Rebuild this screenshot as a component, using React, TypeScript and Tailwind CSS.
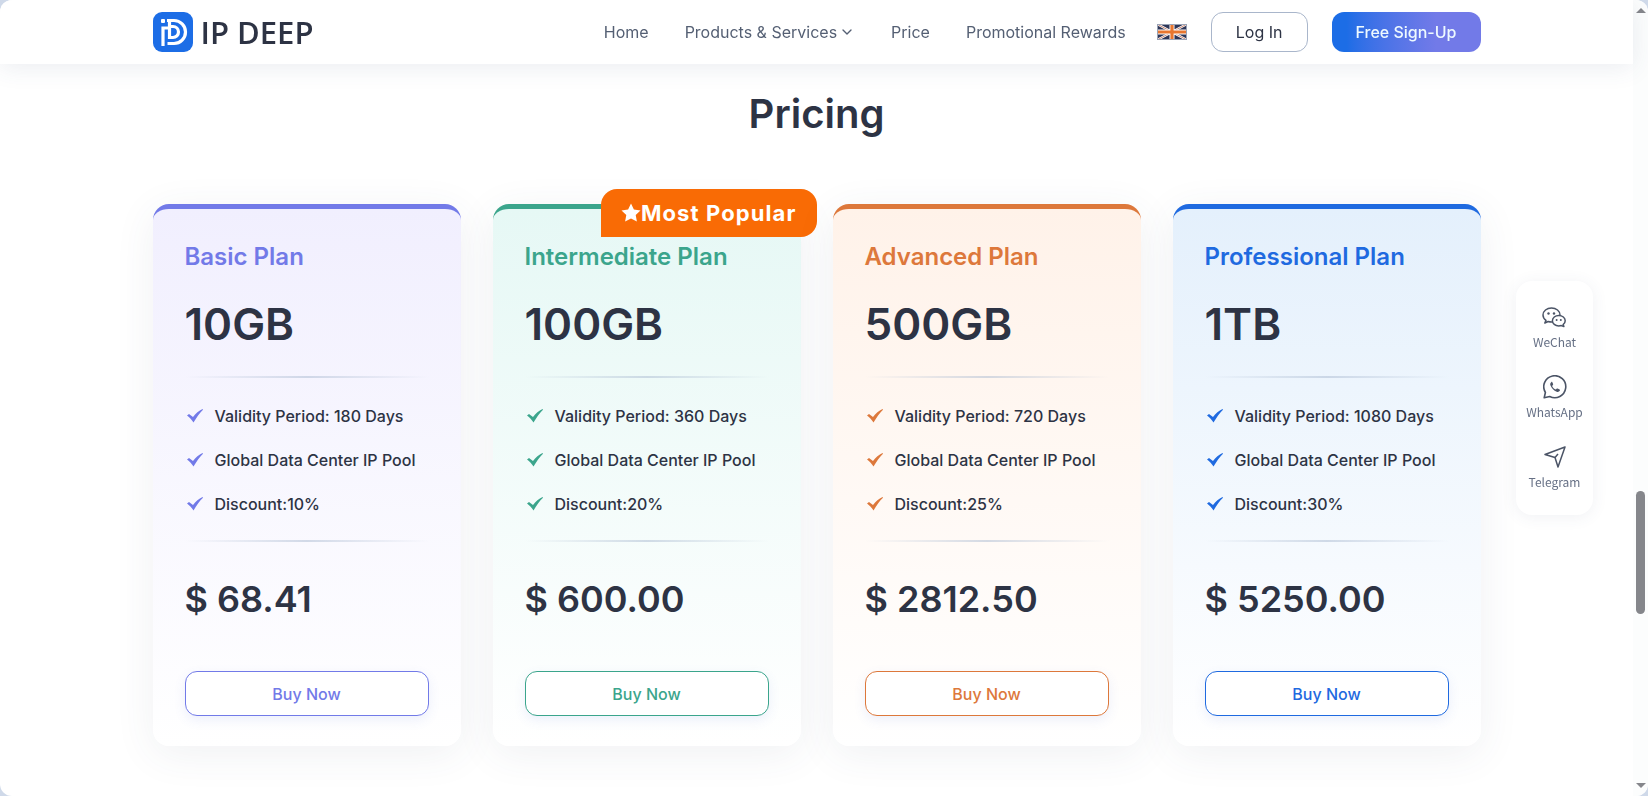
import { ChevronDown } from "lucide-react";

type Plan = {
  name: string;
  size: string;
  days: number;
  discount: number;
  price: string;
  card: string;
  text: string;
  button: string;
  popular?: boolean;
};

const plans: Plan[] = [
  {
    name: "Basic Plan",
    size: "10GB",
    days: 180,
    discount: 10,
    price: "68.41",
    card: "border-[#727ae8] from-[#f1effe]",
    text: "text-[#727ae8]",
    button: "border-[#727ae8]",
  },
  {
    name: "Intermediate Plan",
    size: "100GB",
    days: 360,
    discount: 20,
    price: "600.00",
    card: "border-[#3ba58c] from-[#e6f8f5]",
    text: "text-[#3ba58c]",
    button: "border-[#3ba58c]",
    popular: true,
  },
  {
    name: "Advanced Plan",
    size: "500GB",
    days: 720,
    discount: 25,
    price: "2812.50",
    card: "border-[#dd783b] from-[#fff2e9]",
    text: "text-[#dd783b]",
    button: "border-[#dd783b]",
  },
  {
    name: "Professional Plan",
    size: "1TB",
    days: 1080,
    discount: 30,
    price: "5250.00",
    card: "border-[#1f6ae0] from-[#e4f0fc]",
    text: "text-[#1f6ae0]",
    button: "border-[#1f6ae0]",
  },
];

function Logo() {
  return (
    <a href="#" className="flex items-center gap-2 shrink-0">
      <svg viewBox="0 0 40 40" className="size-10" aria-hidden="true">
        <rect width="40" height="40" rx="9" fill="#1c6de6" />
        <rect x="8" y="7" width="4" height="4" rx="1" fill="#fff" />
        <g fill="none" stroke="#fff" strokeWidth="3.2">
          <path d="M10 34V16h7" />
          <path d="M14 8.500h7a11.500 11.500 0 0 1 0 23h-6.500" />
          <path d="M16.500 8v17.500h3.500a5.500 5.500 0 0 0 0-11h-3" />
        </g>
      </svg>
      <span className="font-['Open_Sans',sans-serif] text-[31px] leading-10 font-semibold">IP DEEP</span>
    </a>
  );
}

function Flag() {
  return (
    <svg viewBox="0 0 30 16" className="w-[30px] h-4" aria-hidden="true">
      <rect width="30" height="16" fill="#2d3557" />
      <path d="M0 0l30 16M30 0L0 16" stroke="#fff" strokeWidth="2.4" />
      <path d="M0 0l30 16M30 0L0 16" stroke="#b0563a" strokeWidth=".7" />
      <path d="M15 0v16M0 8h30" stroke="#fff" strokeWidth="5" />
      <path d="M15 0v16M0 8h30" stroke="#e8762f" strokeWidth="3.2" />
      <rect x=".5" y=".5" width="29" height="15" fill="none" stroke="#9aa3b5" />
    </svg>
  );
}

function Header() {
  return (
    <header className="relative z-10 bg-white shadow-[0_4px_24px_rgba(60,80,120,0.10)]">
      <div className="max-w-[1328px] mx-auto h-16 flex items-center justify-between">
        <Logo />
        <div className="flex items-center gap-6">
          <nav className="flex items-center gap-9 mr-[7px] text-base text-[#545f73]">
            <a href="#">Home</a>
            <a href="#" className="flex items-center gap-0.5">
              Products &amp; Services
              <ChevronDown size={16} />
            </a>
            <a href="#">Price</a>
            <a href="#">Promotional Rewards</a>
          </nav>
          <button aria-label="Language">
            <Flag />
          </button>
          <button className="h-10 px-6 rounded-xl border border-[#a9b6cb]">Log In</button>
          <button className="h-10 px-6 rounded-xl bg-linear-to-r from-[#1c6de6] from-10% to-[#727ae8] to-70% font-medium text-[#eefaff]">
            Free Sign-Up
          </button>
        </div>
      </div>
    </header>
  );
}

function Check() {
  return (
    <svg viewBox="0 0 16 14" className="w-4 h-[14px] ml-0.5 shrink-0" fill="currentColor" aria-hidden="true">
      <path d="M0 6.500l2-1.500 4 3C8.500 4.500 12 1.500 15.500 0l.5.700C12.500 4 9.500 8.500 6.500 13.500 5 11 2.500 8.500 0 6.500z" />
    </svg>
  );
}

function Divider() {
  return <div className="h-0.5 bg-linear-to-r from-transparent via-[#a9b9d0]/50 to-transparent" />;
}

function PlanCard({ plan }: { plan: Plan }) {
  const features = [
    `Validity Period: ${plan.days} Days`,
    "Global Data Center IP Pool",
    `Discount:${plan.discount}%`,
  ];

  return (
    <article
      className={`relative rounded-2xl border-t-[5px] bg-linear-to-b to-white px-8 pt-[33px] pb-[30px] shadow-[0_8px_40px_rgba(60,80,100,0.08)] ${plan.card}`}
    >
      {plan.popular && (
        <div className="absolute -top-5 -right-4 h-12 px-5 flex items-center rounded-2xl rounded-bl-none bg-[#f96b05] text-white text-[22px] font-bold tracking-wider whitespace-nowrap">
          <svg viewBox="0 0 20 20" className="size-5 shrink-0" fill="currentColor" aria-hidden="true">
            <path d="M10 .5l2.900 6 6.600.9-4.800 4.600 1.200 6.500L10 15.400l-5.900 3.100 1.200-6.500L.5 7.400l6.600-.9z" />
          </svg>
          Most Popular
        </div>
      )}
      <h2 className={`text-2xl leading-[30px] font-semibold ${plan.text}`}>{plan.name}</h2>
      <p className="mt-6 text-[44px] leading-14 font-semibold">{plan.size}</p>
      <div className="mt-6">
        <Divider />
      </div>
      <ul className="mt-[26px] mb-6 flex flex-col gap-5 font-medium">
        {features.map((feature) => (
          <li key={feature} className="flex items-center gap-3 leading-6">
            <span className={plan.text}>
              <Check />
            </span>
            {feature}
          </li>
        ))}
      </ul>
      <Divider />
      <p className="mt-[35px] text-4xl leading-11 font-semibold">$ {plan.price}</p>
      <button
        className={`mt-[50px] w-full h-[45px] rounded-xl border bg-white font-medium shadow-[0_4px_12px_rgba(80,110,220,0.10)] ${plan.text} ${plan.button}`}
      >
        Buy Now
      </button>
    </article>
  );
}

function WeChatIcon() {
  return (
    <svg viewBox="0 0 24 24" className="size-6 text-[#4b5466]" fill="none" stroke="currentColor" strokeWidth="1.5" strokeLinejoin="round" aria-hidden="true">
      <path d="M9.500 3C4.800 3 1 6.100 1 10c0 2.200 1.200 4.100 3 5.400L2.800 18l3.400-1.500c1 .3 2.100.5 3.300.5 4.700 0 8.500-3.100 8.500-7s-3.800-7-8.500-7z" />
      <path d="M16.800 10.500c3.600 0 6.400 2.300 6.400 5.200 0 1.600-.8 3-2.100 3.900l.8 2-2.600-1c-.8.200-1.600.3-2.500.3-3.600 0-6.400-2.300-6.400-5.200s2.800-5.200 6.400-5.200z" fill="#fff" />
      <g fill="currentColor" stroke="none">
        <circle cx="6.500" cy="8.500" r="1.200" />
        <circle cx="12" cy="8.500" r="1.200" />
        <circle cx="14.600" cy="15" r="1" />
        <circle cx="18.800" cy="15" r="1" />
      </g>
    </svg>
  );
}

function WhatsAppIcon() {
  return (
    <svg viewBox="0 0 24 24" className="size-6 text-[#4b5466]" fill="none" stroke="currentColor" strokeWidth="1.6" strokeLinejoin="round" aria-hidden="true">
      <path d="M1.200 22.800l1.200-5.300a11 11 0 1 1 4.300 4z" />
      <path
        d="M8.200 7.200c-1 .8-1.300 2-.7 3.300 1.200 2.900 3.400 5.100 6.200 6.200 1.300.5 2.600 0 3.200-1.100.2-.5.100-.9-.3-1.100l-2-1c-.4-.2-.7-.1-1 .2l-.8.9c-1.700-.8-2.900-2-3.700-3.700l.8-.8c.3-.3.3-.6.200-1l-.9-2c-.2-.4-.6-.3-1 .1z"
        fill="currentColor"
        stroke="none"
      />
    </svg>
  );
}

function TelegramIcon() {
  return (
    <svg viewBox="0 0 24 24" className="size-6 text-[#4b5466]" fill="none" stroke="currentColor" strokeWidth="1.5" strokeLinejoin="round" aria-hidden="true">
      <path d="M22 2L2 9.500l10 3L15 22z" />
      <path d="M12 12.500l3-3.500" />
    </svg>
  );
}

function ContactBar() {
  return (
    <aside className="fixed right-[55px] top-[281px] w-[77px] py-6 rounded-2xl bg-white shadow-[0_2px_16px_rgba(60,80,120,0.08)] flex flex-col items-center gap-6 font-['Noto_Sans_CJK_SC',sans-serif] text-xs leading-[18px] text-[#667085]">
      <a href="#" className="flex flex-col items-center gap-1">
        <WeChatIcon />
        WeChat
      </a>
      <a href="#" className="flex flex-col items-center gap-1">
        <WhatsAppIcon />
        WhatsApp
      </a>
      <a href="#" className="flex flex-col items-center gap-1">
        <TelegramIcon />
        Telegram
      </a>
    </aside>
  );
}

function ScrollRail() {
  return (
    <div className="fixed right-0 inset-y-0 w-[15px] flex flex-col items-center py-2 bg-[#fcfdfd] rounded-r-xl" aria-hidden="true">
      <svg viewBox="0 0 10 5" className="w-2.5 h-[5px]" fill="#85868b">
        <path d="M5 0l5 5H0z" />
      </svg>
      <div className="flex-[478]" />
      <div className="w-[9px] flex-[123] rounded-full bg-[#85868b]" />
      <div className="flex-[169]" />
      <svg viewBox="0 0 10 5" className="w-2.5 h-[5px]" fill="#85868b">
        <path d="M0 0h10L5 5z" />
      </svg>
    </div>
  );
}

export default function App() {
  return (
    <div className="bg-[#cfd9e9]">
      <div className="min-h-screen rounded-xl overflow-hidden bg-white pr-[15px] font-[Inter,sans-serif] text-base text-[#2d3344]">
        <Header />
        <main className="max-w-[1328px] mx-auto pt-[25px] pb-12">
          <h1 className="text-center text-[40px] leading-[50px] font-semibold">Pricing</h1>
          <section className="mt-[65px] grid grid-cols-4 gap-8">
            {plans.map((plan) => (
              <PlanCard key={plan.name} plan={plan} />
            ))}
          </section>
        </main>
        <ContactBar />
        <ScrollRail />
      </div>
    </div>
  );
}
